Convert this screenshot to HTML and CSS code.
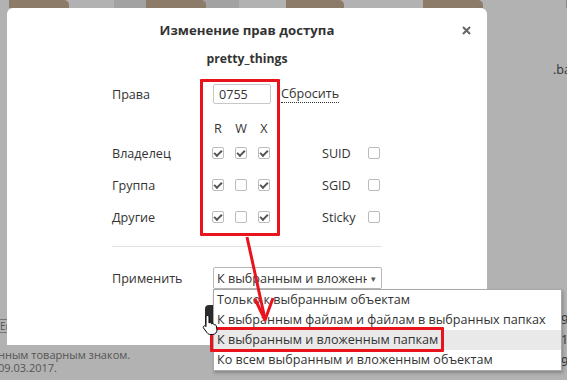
FILE: index.html
```html
<!DOCTYPE html>
<html>
<head>
  <meta charset="UTF-8" />
  <title>Изменение прав доступа</title>
  <link rel="stylesheet" href="styles.css">
</head>
<body>
  <div class="desk">
    <div class="shelf">
      <span class="folder first"></span>
      <div class="picked"><span class="folder"></span></div>
      <span class="folder third"></span>
      <span class="folder fourth"></span>
      <span class="edge"></span>
    </div>

    <div class="stage">
      <div class="rail">
        <span class="lang">En</span>
      </div>

      <div class="dialog">
        <div class="dialog-head">
          <h2 class="dialog-title">Изменение прав доступа</h2>
          <svg class="close" width="9" height="9" viewBox="0 0 9 9">
            <path d="M1 1L8 8M8 1L1 8" stroke="#666" stroke-width="2" />
          </svg>
        </div>
        <div class="file-name">pretty_things</div>

        <div class="perm-form">
          <div class="row mode-row">
            <span class="label wide">Права</span>
            <input class="mode" type="text" value="0755">
            <a class="reset">Сбросить</a>
          </div>

          <div class="row head-row">
            <span class="label"></span>
            <span class="col">R</span>
            <span class="col">W</span>
            <span class="col">X</span>
          </div>

          <div class="row">
            <span class="label">Владелец</span>
            <span class="cb on"></span>
            <span class="cb on"></span>
            <span class="cb on"></span>
            <span class="flag">SUID</span>
            <span class="cb"></span>
          </div>
          <div class="row">
            <span class="label">Группа</span>
            <span class="cb on"></span>
            <span class="cb"></span>
            <span class="cb on"></span>
            <span class="flag">SGID</span>
            <span class="cb"></span>
          </div>
          <div class="row">
            <span class="label">Другие</span>
            <span class="cb on"></span>
            <span class="cb"></span>
            <span class="cb on"></span>
            <span class="flag">Sticky</span>
            <span class="cb"></span>
          </div>

          <div class="sep"></div>

          <div class="row apply-row">
            <span class="label wide">Применить</span>
            <div class="select">
              <span class="select-text">К выбранным и вложенным папкам</span>
              <span class="caret">&#9662;</span>
            </div>
          </div>

          <div class="actions">
            <button class="ok">Применить</button>
          </div>
        </div>
      </div>

      <div class="side">
        <span class="side-name">.bak</span>
        <span class="side-num n1">9</span>
        <span class="side-num n2">1</span>
        <span class="side-num n3">94</span>
      </div>
    </div>

    <div class="footnote">
      <div>нным товарным знаком.</div>
      <div>09.03.2017.</div>
    </div>

    <!-- annotations drawn over the screenshot -->
    <ul class="dropdown">
      <li>Только к выбранным объектам</li>
      <li>К выбранным файлам и файлам в выбранных папках</li>
      <li class="hover">К выбранным и вложенным папкам</li>
      <li>Ко всем выбранным и вложенным объектам</li>
    </ul>
    <div class="mark mark-matrix"></div>
    <div class="mark mark-item"></div>
    <svg class="arrow" width="567" height="380" viewBox="0 0 567 380">
      <line x1="247" y1="237" x2="265" y2="319" stroke="#e8131d" stroke-width="3" />
      <polyline points="255,299 265,320 273,298" fill="none" stroke="#e8131d" stroke-width="3" stroke-linejoin="round" />
    </svg>
    <svg class="hand" width="17" height="23" viewBox="0 0 17 23">
      <path d="M5.5 1.5c.8 0 1.5.7 1.5 1.5v6l.5-.3c.8-.3 1.7 0 2 .8l.2.4.4-.2c.8-.3 1.7.1 2 .9l.1.3.3-.1c.8-.2 1.6.3 1.8 1.1L15 16c0 2.5-2 4.5-4.5 4.5H8.5c-1.3 0-2.5-.6-3.3-1.6L1.5 14c-.5-.7-.3-1.6.4-2 .6-.4 1.4-.3 1.9.2L4 12.5V3c0-.8.7-1.5 1.5-1.5z" fill="#fff" stroke="#000" stroke-width="1" />
    </svg>
  </div>
</body>
</html>
```

FILE: styles.css
```css
body {
  margin: 0;
  font-family: "Open Sans", "Noto Sans", sans-serif;
  color: #333;
}
.desk {
  position: relative;
  width: 567px;
  height: 380px;
  overflow: hidden;
  background: #b2b2b2;
}
.shelf {
  display: flex;
  height: 8px;
}
.folder {
  display: block;
  flex-shrink: 0;
  width: 60px;
  height: 8px;
  background: #8d7b69;
  border-top-right-radius: 5px;
}
.folder.first {
  margin-left: 9px;
}
.picked {
  flex-shrink: 0;
  margin-left: 45px;
  width: 125px;
  height: 8px;
  background: #a2a2a2;
}
.picked .folder {
  margin-left: 32px;
}
.folder.third {
  margin-left: 47px;
  width: 58px;
}
.folder.fourth {
  margin-left: 79px;
}
.edge {
  flex-shrink: 0;
  margin-left: 83px;
  width: 1px;
  height: 8px;
  background: #8a8a8a;
}

.stage {
  display: flex;
  height: 337px;
}
.rail {
  flex-shrink: 0;
  width: 7px;
}
.lang {
  display: block;
  margin-top: 311px;
  width: 14px;
  height: 12px;
  margin-left: -4px;
  border: 1px solid #777;
  font-size: 10px;
  line-height: 12px;
  color: #555;
  text-indent: 3px;
}
.dialog {
  position: relative;
  flex-shrink: 0;
  width: 480px;
  height: 337px;
  background: #fff;
  border-radius: 6px 6px 0 0;
}
.dialog-head {
  display: flex;
  justify-content: center;
  padding-top: 12px;
  position: relative;
}
.dialog-title {
  margin: 0;
  font-size: 13.2px;
  line-height: 20px;
  font-weight: bold;
  color: #333;
}
.close {
  position: absolute;
  right: 16px;
  top: 18px;
}
.file-name {
  margin-top: 9px;
  text-align: center;
  font-size: 12.2px;
  line-height: 20px;
  font-weight: bold;
}

.perm-form {
  padding-left: 105px;
  font-size: 12.6px;
}
.row {
  display: flex;
  align-items: center;
  height: 32px;
}
.label {
  flex-shrink: 0;
  width: 100px;
}
.label.wide {
  width: 101px;
}
.mode-row {
  margin-top: 14px;
  height: 22px;
}
.mode {
  box-sizing: border-box;
  width: 58px;
  height: 20px;
  padding: 0 5px;
  border: 1px solid #c8c8c8;
  border-radius: 2px;
  font-family: inherit;
  font-size: 12.6px;
  color: #333;
}
.reset {
  margin-left: 10px;
  border-bottom: 1px dotted #333;
  line-height: 16px;
}
.head-row {
  margin-top: 14px;
  height: 18px;
}
.col {
  width: 12px;
  margin-right: 11px;
  text-align: center;
}
.cb {
  box-sizing: border-box;
  display: flex;
  align-items: center;
  justify-content: center;
  flex-shrink: 0;
  width: 12px;
  height: 12px;
  margin-right: 11px;
  border: 1px solid #bcbcbc;
  border-radius: 2px;
  background: #fff;
}
.cb.on::after {
  content: "";
  width: 6px;
  height: 3px;
  margin-top: -2px;
  border-left: 2px solid #555;
  border-bottom: 2px solid #555;
  transform: rotate(-45deg);
}
.flag {
  margin-left: 41px;
  width: 46px;
}
.sep {
  width: 270px;
  height: 1px;
  margin-top: 13px;
  background: #e2e2e2;
}
.apply-row {
  margin-top: 20px;
  height: 22px;
}
.select {
  box-sizing: border-box;
  display: flex;
  align-items: center;
  width: 169px;
  height: 22px;
  padding-left: 3px;
  border: 1px solid #b8b8b8;
  border-radius: 2px;
}
.select-text {
  width: 150px;
  overflow: hidden;
  white-space: nowrap;
}
.caret {
  margin-left: 4px;
  font-size: 9px;
  color: #555;
}
.actions {
  margin-top: 16px;
  padding-left: 93px;
}
.ok {
  width: 110px;
  height: 22px;
  border: none;
  border-radius: 4px;
  background: #2b2b2b;
  color: #2b2b2b;
  font-family: inherit;
}

.side {
  display: flex;
  flex-direction: column;
  min-width: 0;
  flex: 1;
  font-size: 12.6px;
  color: #333;
}
.side-name {
  margin-top: 54px;
  margin-left: 66px;
  line-height: 16px;
  white-space: nowrap;
}
.side-num {
  margin-left: 74px;
  line-height: 16px;
  white-space: nowrap;
}
.n1 {
  margin-top: 234px;
}
.n2 {
  margin-top: 4px;
}
.n3 {
  margin-top: 6px;
}

.footnote {
  margin-top: 3px;
  margin-left: -2px;
  font-size: 11px;
  line-height: 13px;
  color: #555;
}

.dropdown {
  position: absolute;
  left: 213px;
  top: 289px;
  width: 349px;
  margin: 0;
  padding: 0;
  list-style: none;
  box-sizing: border-box;
  background: #fff;
  border: 1px solid #a9a9a9;
  box-shadow: 1px 2px 3px rgba(0,0,0,0.25);
  font-size: 12.6px;
  color: #333;
}
.dropdown li {
  height: 20px;
  line-height: 20px;
  padding-left: 3px;
  white-space: nowrap;
}
.dropdown li.hover {
  background: #e9e9e9;
}
.mark {
  position: absolute;
  box-sizing: border-box;
  border: 3px solid #e8131d;
  border-radius: 1px;
}
.mark-matrix {
  left: 200px;
  top: 79px;
  width: 80px;
  height: 157px;
}
.mark-item {
  left: 210px;
  top: 327px;
  width: 234px;
  height: 25px;
}
.arrow {
  position: absolute;
  left: 0;
  top: 0;
}
.hand {
  position: absolute;
  left: 202px;
  top: 314px;
}
```
